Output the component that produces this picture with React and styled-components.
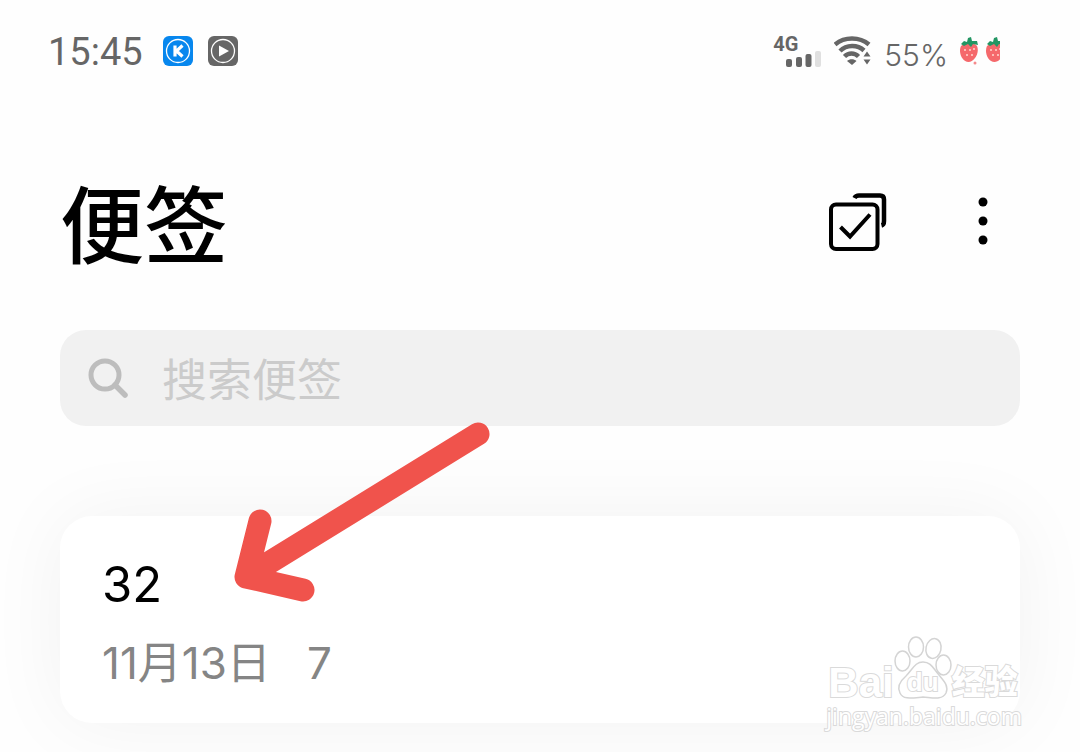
import React, { useState } from "react";
import styled, { createGlobalStyle } from "styled-components";

const GlobalStyle = createGlobalStyle`
  * {
    box-sizing: border-box;
  }

  body {
    margin: 0;
    background-color: #fefefe;
    font-family: Inter, "Noto Sans CJK SC", sans-serif;
    overflow-x: hidden;
  }
`;

const Page = styled.div`
  position: relative;
  min-height: 100vh;
  overflow: hidden;
`;

const StatusBar = styled.header`
  display: flex;
  justify-content: space-between;
  align-items: center;
  height: 102px;
  padding: 0 80px 0 48px;
  color: #666666;
`;

const StatusGroup = styled.div`
  display: flex;
  align-items: center;
  gap: ${({ $gap }) => $gap}px;
`;

const Clock = styled.time`
  margin-right: 5px;
  padding-top: 2px;
  font-family: Roboto, sans-serif;
  font-size: 38px;
  line-height: 40px;
`;

const Signal = styled.div`
  display: flex;
  align-items: flex-end;
  height: 32px;
`;

const NetworkType = styled.span`
  align-self: flex-start;
  margin-right: -12px;
  font-family: Roboto, sans-serif;
  font-size: 20px;
  font-weight: 700;
  line-height: 18px;
`;

const Battery = styled.span`
  padding-top: 8px;
  font-size: 30px;
  font-weight: 300;
  line-height: 32px;
`;

const TitleBar = styled.div`
  display: flex;
  justify-content: space-between;
  align-items: center;
  height: 228px;
  padding: 22px 60px 0;
`;

const Title = styled.h1`
  margin: 0;
  font-size: 84px;
  font-weight: 500;
  line-height: 96px;
  color: #000000;
`;

const Actions = styled.div`
  display: flex;
  align-items: center;
  gap: 64px;
  padding: 0 5px 10px 0;
`;

const IconButton = styled.button`
  display: flex;
  padding: 0;
  border: none;
  background: none;
  color: #000000;
  cursor: pointer;
`;

const SearchBox = styled.label`
  display: flex;
  align-items: center;
  gap: 34px;
  height: 96px;
  margin: 0 60px;
  padding: 0 28px;
  border-radius: 26px;
  background-color: #f1f1f1;
`;

const SearchInput = styled.input`
  flex: 1;
  min-width: 0;
  padding: 6px 0 0;
  border: none;
  outline: none;
  background: transparent;
  font-family: inherit;
  font-size: 45px;
  line-height: 60px;
  color: #000000;

  &::placeholder {
    color: #cbcbcb;
    opacity: 1;
  }
`;

const NoteList = styled.main`
  padding: 90px 60px 28px;
`;

const NoteCard = styled.article`
  position: relative;
  padding: 39px 42px 30px;
  border-radius: 32px;
  background-color: #ffffff;
  box-shadow: 0 0 80px rgba(0, 0, 0, 0.05);
`;

const NoteTitle = styled.h2`
  margin: 0;
  font-size: 49px;
  font-weight: 400;
  line-height: 60px;
  color: #000000;
`;

const NoteMeta = styled.p`
  display: flex;
  gap: 36px;
  margin: 18px 0 0;
  font-size: 44px;
  line-height: 60px;
  color: #858585;
`;

const Arrow = styled.svg`
  position: absolute;
  top: -96px;
  left: 172px;
  pointer-events: none;
`;

const Watermark = styled.div`
  position: absolute;
  right: 58px;
  bottom: 20px;
  color: #ffffff;
`;

const WatermarkLogo = styled.div`
  display: flex;
  align-items: flex-end;
  padding-left: 2px;
`;

const OutlineText = styled.span`
  display: block;
  font-family: ${({ $family }) => $family || '"Open Sans"'}, "Noto Sans CJK SC", sans-serif;
  font-size: ${({ $size }) => $size}px;
  font-weight: ${({ $weight }) => $weight};
  line-height: ${({ $line }) => $line}px;
  paint-order: stroke fill;
  -webkit-text-stroke: 2px #dadada;
`;

const Paw = styled.span`
  position: relative;
  display: flex;
`;

const PawText = styled.span`
  position: absolute;
  right: 0;
  bottom: 4px;
  left: 0;
  text-align: center;
`;

const AppIcon = ({ color, children }) => (
  <svg width="30" height="30" viewBox="0 0 30 30" fill="none" aria-hidden="true">
    <rect width="30" height="30" rx="6" fill={color} />
    <circle cx="15" cy="15" r="11.5" stroke="#fff" strokeWidth="1.3" />
    {children}
  </svg>
);

const SignalBars = () => (
  <svg width="36" height="16" viewBox="0 0 36 16" fill="currentColor" aria-hidden="true">
    <rect x="0" y="8" width="6" height="8" rx="2" />
    <rect x="10" y="6" width="6" height="10" rx="2" />
    <rect x="19.500" y="3" width="6" height="13" rx="2" />
    <rect x="29" y="0" width="6" height="16" rx="2" fill="#e0e0e0" />
  </svg>
);

const WifiIcon = () => (
  <svg width="38" height="30" viewBox="0 0 38 30" fill="none" aria-hidden="true">
    <path d="M1 8.500C10.500 0.500 25.500 0.500 35 8.500" stroke="currentColor" strokeWidth="4.500" />
    <path d="M6 15C12.500 8.500 23.500 8.500 30 14.500" stroke="currentColor" strokeWidth="4.500" />
    <path d="M10.500 20.500C14.500 16.500 20.500 16.500 24.500 20.500" stroke="currentColor" strokeWidth="4.500" />
    <path d="M13 25C15.500 22.500 20 22.500 22.500 25L18 29Z" fill="currentColor" />
    <path d="M29.500 20.500L33 15.500L36.500 20.500ZM29.500 23.500H36.500L33 28.500Z" fill="currentColor" />
  </svg>
);

const Strawberry = () => (
  <g>
    <path
      d="M1 9C-2 15 2 25 8.500 25C14 25 20 16 17 9C14 5 5 5 1 9Z"
      fill="#f5696c"
    />
    <path
      d="M1 7L4 4L7 5L8 1L11 0L12 4L17 4L18 8L13 7L11 10L8 7L4 9Z"
      fill="#239663"
    />
    <g fill="#ffd9cf">
      <circle cx="5" cy="13" r="1" />
      <circle cx="10" cy="13" r="1" />
      <circle cx="14" cy="12" r="1" />
      <circle cx="7" cy="18" r="1" />
      <circle cx="12" cy="18" r="1" />
    </g>
  </g>
);

const StrawberryIcons = () => (
  <svg width="40" height="28" viewBox="0 0 40 28" aria-hidden="true">
    <Strawberry />
    <circle cx="15" cy="26" r="1.500" fill="#f58a8c" />
    <g transform="translate(26 0)">
      <Strawberry />
    </g>
  </svg>
);

const SelectIcon = () => (
  <svg width="58" height="58" viewBox="0 0 58 58" fill="none" stroke="currentColor" aria-hidden="true">
    <rect x="2" y="11.500" width="46.500" height="44.500" rx="5" strokeWidth="4" />
    <path d="M11.500 34L21 43.500L41 21.500" strokeWidth="4" />
    <path d="M25.500 5C26.500 3 27.500 2.500 30 2.500H51Q55 2.500 55 6.500V28C55 30.500 54.500 32 52.500 32.500" strokeWidth="4.500" />
  </svg>
);

const MoreIcon = () => (
  <svg width="64" height="58" viewBox="0 0 64 58" fill="currentColor" aria-hidden="true">
    <circle cx="32" cy="9" r="4.500" />
    <circle cx="32" cy="28" r="4.500" />
    <circle cx="32" cy="47" r="4.500" />
  </svg>
);

const SearchIcon = () => (
  <svg width="40" height="40" viewBox="0 0 40 40" fill="none" stroke="#bdbdbd" aria-hidden="true">
    <circle cx="17" cy="17" r="14" strokeWidth="5" />
    <path d="M27 27L37 37" strokeWidth="5.500" strokeLinecap="round" />
  </svg>
);

const PawIcon = () => (
  <svg width="58" height="64" viewBox="0 0 58 64" fill="#fff" stroke="#d4d4d4" strokeWidth="1.500" aria-hidden="true">
    <ellipse cx="8.500" cy="25" rx="7.500" ry="10" />
    <ellipse cx="22" cy="11" rx="7.500" ry="10" />
    <ellipse cx="39.500" cy="12.500" rx="7.500" ry="10" transform="rotate(12 39.500 12.500)" />
    <ellipse cx="49.500" cy="29" rx="7.500" ry="10" />
    <path d="M29 26C21 26 19 33 12 40C5 46 3 51 6 57C9 64 18 62 29 61C41 62 48 64 52 57C55 50 50 45 45 39C39 32 37 26 29 26Z" />
  </svg>
);

const notes = [{ id: 1, title: "32", date: "11月13日", summary: "7" }];

export default function App() {
  const [keyword, setKeyword] = useState("");

  const renderNote = ({ id, title, date, summary }) => (
    <NoteCard key={id}>
      <NoteTitle>{title}</NoteTitle>
      <NoteMeta>
        <span>{date}</span>
        <span>{summary}</span>
      </NoteMeta>
      <Arrow width="260" height="190" viewBox="0 0 260 190" fill="none" aria-hidden="true">
        <path
          d="M246 14L14 157M28 101L14 157L71 170"
          stroke="#f0534c"
          strokeWidth="23"
          strokeLinecap="round"
          strokeLinejoin="round"
        />
      </Arrow>
    </NoteCard>
  );

  return (
    <Page>
      <GlobalStyle />
      <StatusBar>
        <StatusGroup $gap={15}>
          <Clock>15:45</Clock>
          <AppIcon color="#0787ee">
            <path d="M12 9.500V20.500M19.500 9.500L13.500 15L19.500 20.500" stroke="#fff" strokeWidth="3.200" />
          </AppIcon>
          <AppIcon color="#666666">
            <path d="M11 9.500L21 15L11 20.500Z" fill="#fff" />
          </AppIcon>
        </StatusGroup>
        <StatusGroup $gap={12}>
          <Signal>
            <NetworkType>4G</NetworkType>
            <SignalBars />
          </Signal>
          <WifiIcon />
          <Battery>55%</Battery>
          <StrawberryIcons />
        </StatusGroup>
      </StatusBar>

      <TitleBar>
        <Title>便签</Title>
        <Actions>
          <IconButton type="button" aria-label="选择">
            <SelectIcon />
          </IconButton>
          <IconButton type="button" aria-label="更多">
            <MoreIcon />
          </IconButton>
        </Actions>
      </TitleBar>

      <SearchBox>
        <SearchIcon />
        <SearchInput
          type="text"
          aria-label="搜索便签"
          placeholder="搜索便签"
          value={keyword}
          onChange={(e) => setKeyword(e.target.value)}
        />
      </SearchBox>

      <NoteList>{notes.map(renderNote)}</NoteList>

      <Watermark>
        <WatermarkLogo>
          <OutlineText $size={42} $weight={700} $line={34} $family={'"Liberation Sans"'}>
            Bai
          </OutlineText>
          <Paw>
            <PawIcon />
            <PawText>
              <OutlineText $size={26} $weight={600} $line={28} $family={'"Liberation Sans"'}>
                du
              </OutlineText>
            </PawText>
          </Paw>
          <OutlineText $size={33} $weight={900} $line={34} $family={'"Liberation Sans"'}>
            经验
          </OutlineText>
        </WatermarkLogo>
        <OutlineText $size={23} $weight={400} $line={32}>
          jingyan.baidu.com
        </OutlineText>
      </Watermark>
    </Page>
  );
}
